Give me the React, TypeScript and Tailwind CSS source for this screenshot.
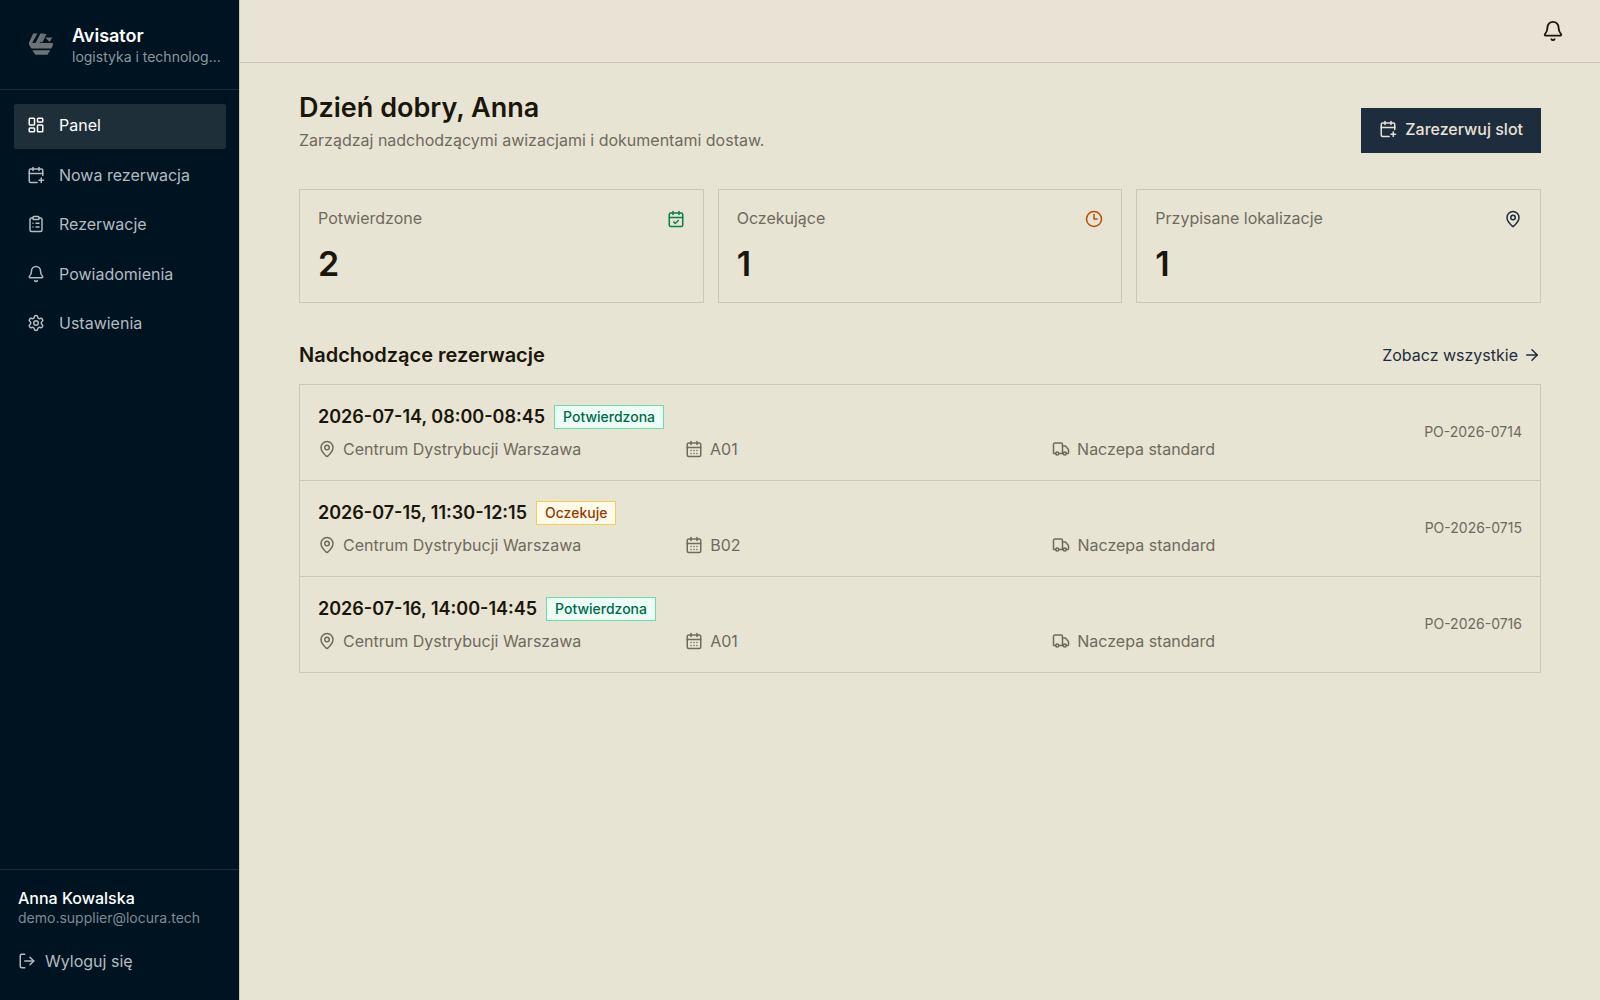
import React from 'react';
import {
  ArrowRight,
  Bell,
  CalendarCheck,
  CalendarDays,
  CalendarPlus,
  ClipboardList,
  Clock3,
  LayoutDashboard,
  LogOut,
  MapPin,
  Settings,
  Truck,
  type LucideIcon,
} from 'lucide-react';

type Status = 'confirmed' | 'pending';

interface Booking {
  ref: string;
  slot: string;
  status: Status;
  location: string;
  dock: string;
  vehicle: string;
}

const NAV_ITEMS: { label: string; icon: LucideIcon; active?: boolean }[] = [
  { label: 'Panel', icon: LayoutDashboard, active: true },
  { label: 'Nowa rezerwacja', icon: CalendarPlus },
  { label: 'Rezerwacje', icon: ClipboardList },
  { label: 'Powiadomienia', icon: Bell },
  { label: 'Ustawienia', icon: Settings },
];

const STATS: { label: string; value: number; icon: LucideIcon; color: string }[] = [
  { label: 'Potwierdzone', value: 2, icon: CalendarCheck, color: 'text-[#0b7f4f]' },
  { label: 'Oczekujące', value: 1, icon: Clock3, color: 'text-[#bb4d00]' },
  { label: 'Przypisane lokalizacje', value: 1, icon: MapPin, color: 'text-[#1e2d3d]' },
];

const BOOKINGS: Booking[] = [
  {
    ref: 'PO-2026-0714',
    slot: '2026-07-14, 08:00-08:45',
    status: 'confirmed',
    location: 'Centrum Dystrybucji Warszawa',
    dock: 'A01',
    vehicle: 'Naczepa standard',
  },
  {
    ref: 'PO-2026-0715',
    slot: '2026-07-15, 11:30-12:15',
    status: 'pending',
    location: 'Centrum Dystrybucji Warszawa',
    dock: 'B02',
    vehicle: 'Naczepa standard',
  },
  {
    ref: 'PO-2026-0716',
    slot: '2026-07-16, 14:00-14:45',
    status: 'confirmed',
    location: 'Centrum Dystrybucji Warszawa',
    dock: 'A01',
    vehicle: 'Naczepa standard',
  },
];

const STATUS_STYLES: Record<Status, { label: string; className: string }> = {
  confirmed: { label: 'Potwierdzona', className: 'border-[#6ddcaa] bg-[#ecfdf5] text-[#00694a]' },
  pending: { label: 'Oczekuje', className: 'border-[#f5cf52] bg-[#fffbeb] text-[#973c00]' },
};

function Logo() {
  return (
    <svg viewBox="0 0 45 45" className="size-[45px] shrink-0 fill-[#6d7478]" aria-hidden="true">
      <path d="M15.2 10.5h4.2l-5.3 9.6h3.4l5-9.6h3.8l-4.8 9.6h13.3v2.6l-1.6 2.8H13.4L11 21.8v-2.4z" />
      <path d="M21.6 19.2l4.3-8.2h2.6l-3.2 6.6-1 1.6z" />
      <path d="M27.2 14.4h7l-2.5 4.6z" />
      <path d="M14.3 27.3h18l-2.8 4.5H17.3z" />
    </svg>
  );
}

function Sidebar() {
  return (
    <aside className="sticky top-0 flex h-screen w-[240px] shrink-0 flex-col border-r border-[#cbc8b6] bg-[#001320]">
      <div className="flex h-[90px] items-center gap-[9px] border-b border-[#1b2b36] px-[18px] pt-[2px]">
        <Logo />
        <div className="min-w-0">
          <p className="text-[18px] leading-[22px] font-semibold text-white">Avisator</p>
          <p className="truncate text-[14px] leading-[20px] text-[#8b979f]">logistyka i technolog...</p>
        </div>
      </div>

      <nav aria-label="Menu główne" className="flex-1 py-[14px] pr-[13px] pl-[14px]">
        <ul className="flex h-[243px] flex-col justify-between">
          {NAV_ITEMS.map(({ label, icon: Icon, active }) => (
            <li key={label}>
              <a
                href="#"
                aria-current={active ? 'page' : undefined}
                className={`flex h-[45px] items-center gap-[14px] rounded-[2px] px-[13px] pb-[3px] text-[16px] ${
                  active ? 'bg-[#1f2f3a] text-white' : 'text-[#b3bbc0] hover:text-white'
                }`}
              >
                <Icon className="size-[18px]" />
                {label}
              </a>
            </li>
          ))}
        </ul>
      </nav>

      <div className="border-t border-[#1b2b36] px-[18px] pt-[17px] pb-[19px]">
        <p className="text-[16px] leading-[22px] font-medium text-white">Anna Kowalska</p>
        <p className="text-[14px] leading-[18px] text-[#7d8a93]">demo.supplier@locura.tech</p>
        <button
          type="button"
          className="mt-[14px] flex h-[40px] w-full items-center gap-[9px] text-[16px] text-[#b3bbc0] hover:text-white"
        >
          <LogOut className="size-[18px]" />
          Wyloguj się
        </button>
      </div>
    </aside>
  );
}

function StatCard({ label, value, icon: Icon, color }: (typeof STATS)[number]) {
  return (
    <div className="border border-[#cbc8b6] p-[18px]">
      <div className="flex h-[22px] items-start justify-between">
        <p className="text-[16px] leading-[20px] text-[#6f6a5e]">{label}</p>
        <Icon className={`my-auto size-[18px] ${color}`} />
      </div>
      <p className="mt-[14px] text-[34px] leading-[40px] font-semibold">{value}</p>
    </div>
  );
}

function MetaItem({ icon: Icon, text }: { icon: LucideIcon; text: string }) {
  return (
    <span className="flex items-center gap-[7px]">
      <Icon className="size-[18px]" />
      {text}
    </span>
  );
}

function BookingRow({ booking }: { booking: Booking }) {
  const status = STATUS_STYLES[booking.status];

  return (
    <li className="flex items-center gap-[14px] px-[18px] pt-[18px] pb-[20px]">
      <div className="flex-1">
        <div className="flex items-center gap-[9px]">
          <h3 className="text-[18px] leading-[27px] font-semibold">{booking.slot}</h3>
          <span
            className={`border px-[8px] text-[14px] leading-[22px] font-medium ${status.className}`}
          >
            {status.label}
          </span>
        </div>
        <div className="mt-[8px] grid grid-cols-3 gap-[9px] text-[16px] leading-[22px] text-[#6f6a5e]">
          <MetaItem icon={MapPin} text={booking.location} />
          <MetaItem icon={CalendarDays} text={booking.dock} />
          <MetaItem icon={Truck} text={booking.vehicle} />
        </div>
      </div>
      <span className="text-[14px] text-[#6f6a5e]">{booking.ref}</span>
    </li>
  );
}

export default function App() {
  return (
    <div className="flex min-h-screen bg-[#e7e4d3] font-['Inter',sans-serif] text-[#1a160c]">
      <Sidebar />

      <div className="min-w-0 flex-1">
        <header className="flex h-[63px] items-center justify-end border-b border-[#cbc8b6] bg-[#e8e3d5] px-[36px]">
          <button type="button" aria-label="Powiadomienia">
            <Bell className="size-[22px]" />
          </button>
        </header>

        <main className="mx-auto max-w-[1296px] p-[27px]">
          <div className="flex items-end justify-between">
            <div>
              <h1 className="text-[27px] leading-[36px] font-semibold">Dzień dobry, Anna</h1>
              <p className="mt-[2px] text-[16px] leading-[25px] text-[#6f6a5e]">
                Zarządzaj nadchodzącymi awizacjami i dokumentami dostaw.
              </p>
            </div>
            <button
              type="button"
              className="flex h-[45px] items-center gap-[8px] bg-[#1e2d3d] px-[18px] pb-[3px] text-[16px] font-medium text-[#e8e3d5]"
            >
              <CalendarPlus className="size-[18px]" />
              Zarezerwuj slot
            </button>
          </div>

          <section aria-label="Podsumowanie" className="mt-[36px] grid grid-cols-3 gap-[14px]">
            {STATS.map((stat) => (
              <StatCard key={stat.label} {...stat} />
            ))}
          </section>

          <section aria-labelledby="upcoming-heading" className="mt-[36px]">
            <div className="flex h-[31px] items-center justify-between">
              <h2 id="upcoming-heading" className="text-[20px] font-semibold">
                Nadchodzące rezerwacje
              </h2>
              <a href="#" className="flex items-center gap-[5px] text-[16px] text-[#1e2d3d]">
                Zobacz wszystkie
                <ArrowRight className="size-[18px]" />
              </a>
            </div>
            <ul className="mt-[14px] divide-y divide-[#cbc8b6] border border-[#cbc8b6]">
              {BOOKINGS.map((booking) => (
                <BookingRow key={booking.ref} booking={booking} />
              ))}
            </ul>
          </section>
        </main>
      </div>
    </div>
  );
}
